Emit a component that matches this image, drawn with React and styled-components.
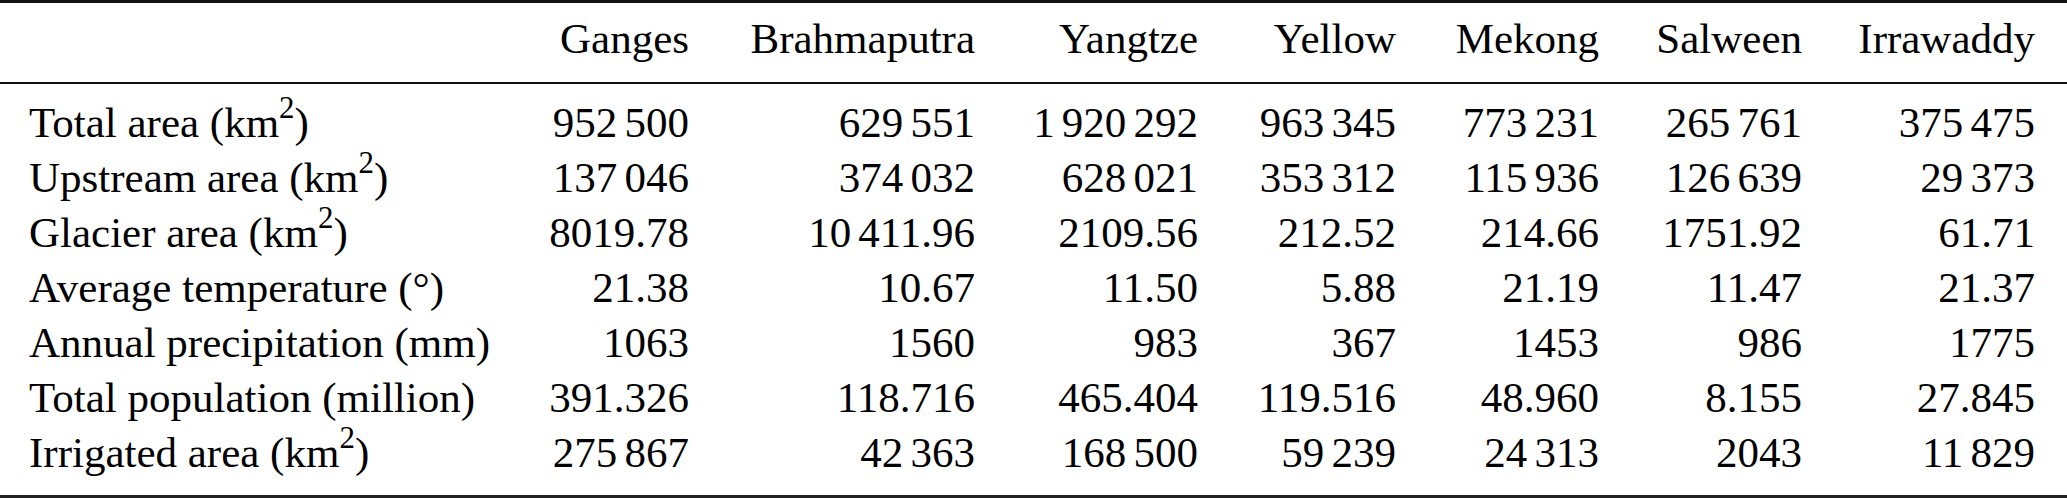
import React from 'react';
import styled, { createGlobalStyle } from 'styled-components';

const GlobalStyle = createGlobalStyle`
  html, body {
    margin: 0;
    padding: 0;
    background: #fff;
  }
  body {
    font-family: "Liberation Serif", "Times New Roman", serif;
    color: #000;
  }
`;

const rivers = ['Ganges', 'Brahmaputra', 'Yangtze', 'Yellow', 'Mekong', 'Salween', 'Irrawaddy'];

const rows = [
  { label: 'Total area', unit: 'km', sup: '2', values: ['952 500', '629 551', '1 920 292', '963 345', '773 231', '265 761', '375 475'] },
  { label: 'Upstream area', unit: 'km', sup: '2', values: ['137 046', '374 032', '628 021', '353 312', '115 936', '126 639', '29 373'] },
  { label: 'Glacier area', unit: 'km', sup: '2', values: ['8019.78', '10 411.96', '2109.56', '212.52', '214.66', '1751.92', '61.71'] },
  { label: 'Average temperature', unit: '°', values: ['21.38', '10.67', '11.50', '5.88', '21.19', '11.47', '21.37'] },
  { label: 'Annual precipitation', unit: 'mm', values: ['1063', '1560', '983', '367', '1453', '986', '1775'] },
  { label: 'Total population', unit: 'million', values: ['391.326', '118.716', '465.404', '119.516', '48.960', '8.155', '27.845'] },
  { label: 'Irrigated area', unit: 'km', sup: '2', values: ['275 867', '42 363', '168 500', '59 239', '24 313', '2043', '11 829'] },
];

const Table = styled.div`
  width: 2067px;
  box-sizing: border-box;
  border-top: 3px solid #111;
  border-bottom: 3px solid #222;
  font-size: 43px;
`;

const Head = styled.div`
  padding: 8px 0 16px;
  border-bottom: 2px solid #111;
`;

const Body = styled.div`
  padding: 11px 0 15px;
`;

const Row = styled.div`
  display: grid;
  grid-template-columns: 500px 160px 286px 223px 198px 203px 203px 233px;
  padding-left: 29px;
  height: 55px;
  line-height: 55px;
  white-space: nowrap;
`;

const Label = styled.div`
  text-align: left;
`;

const Cell = styled.div`
  text-align: right;
`;

const Sup = styled.sup`
  font-size: 0.72em;
  line-height: 0;
  vertical-align: 0.6em;
`;

const Thin = styled.span`
  font-size: 0.667em;
`;

function Num({ value }) {
  const parts = value.split(' ');
  return parts.map((p, i) => (
    <React.Fragment key={i}>
      {i > 0 && <Thin> </Thin>}
      {p}
    </React.Fragment>
  ));
}

export default function App() {
  return (
    <>
      <GlobalStyle />
      <Table>
        <Head>
          <Row>
            <Label />
            {rivers.map((r) => (
              <Cell key={r}>{r}</Cell>
            ))}
          </Row>
        </Head>
        <Body>
          {rows.map((row) => (
            <Row key={row.label}>
              <Label>
                {row.label} ({row.unit}
                {row.sup && <Sup>{row.sup}</Sup>})
              </Label>
              {row.values.map((v, i) => (
                <Cell key={i}>
                  <Num value={v} />
                </Cell>
              ))}
            </Row>
          ))}
        </Body>
      </Table>
    </>
  );
}
